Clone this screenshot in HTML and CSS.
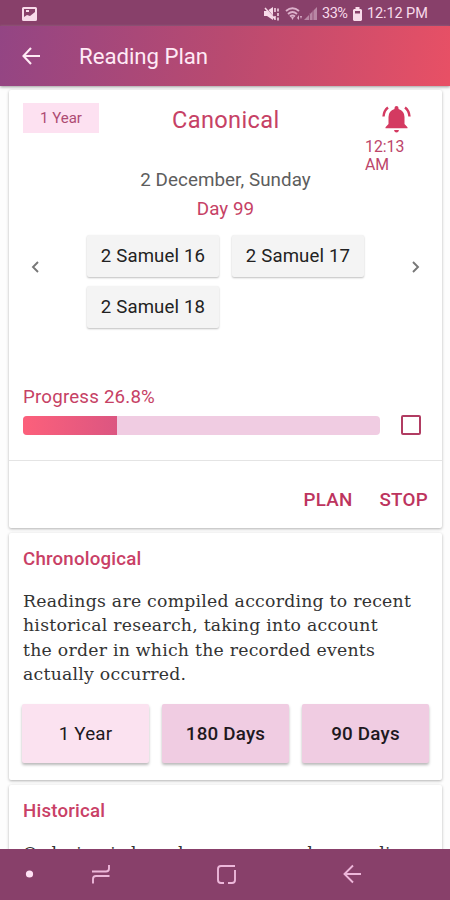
FILE: index.html
```
<!DOCTYPE html>
<html lang="en">
<head>
<meta charset="utf-8">
<title>Reading Plan</title>
<link rel="stylesheet" href="styles.css">
</head>
<body>
<div class="phone">
  <div class="status">
    <svg class="shot" width="15" height="14" viewBox="0 0 15 14"><path fill="#f8dbea" fill-rule="evenodd" d="M1.500 0h12a1.500 1.500 0 0 1 1.500 1.500v11a1.500 1.500 0 0 1-1.500 1.500h-12A1.500 1.500 0 0 1 0 12.500v-11A1.500 1.500 0 0 1 1.500 0zM2 2v8l3-2 3 1 5-4V2z"/><path fill="#f8dbea" d="M4 3h3v2H4z"/></svg>
    <div class="indicators">
      <svg width="17" height="14" viewBox="0 0 17 14"><path fill="#f8dbea" d="M0 4h3l6-4v13L3 9H0z"/><path d="M1 0l11 13" stroke="#88406a" stroke-width="1.200"/><path d="M1 1l10 11M11 1v4M11 9v4M14 1.500v3M14 6v3M14 10.500v3" stroke="#f8dbea" stroke-width="1.500" fill="none"/></svg>
      <svg width="18" height="14" viewBox="0 0 18 14"><g fill="none" stroke="#dcb0cb" stroke-width="1.900"><path d="M1 4q6.500-5.500 13 0M3 7q4.500-4 9 0M5 9.500q2.500-2 5 0"/></g><path fill="#dcb0cb" d="M6 10h3l-1.500 3zM12 11l2-3v5zM15 9h2l-1 3z"/></svg>
      <svg class="signal" width="13" height="13" viewBox="0 0 13 13"><path fill="#b886a4" d="M0 13L13 0v13z"/><path d="M5.500 6v7M9 3v10" stroke="#945078"/></svg>
      <span class="pct">33%</span>
      <svg class="battery" width="9" height="14" viewBox="0 0 9 14"><path fill="#f8dbea" fill-rule="evenodd" d="M2.500 0h4v2H8l1 1v10l-1 1H1l-1-1V3l1-1h1.500zM2 4v2.500h5V4z"/></svg>
      <span class="clock">12:12 PM</span>
    </div>
  </div>
  <header class="bar">
    <svg width="18" height="18" viewBox="0 0 18 18"><path d="M9 1L1.500 9 9 17M2 9h16" fill="none" stroke="#ffeaf5" stroke-width="2.100"/></svg>
    <h1>Reading Plan</h1>
  </header>
  <main>
    <section class="card current">
      <div class="head">
        <span class="tag">1 Year</span>
        <h2>Canonical</h2>
        <div class="alarm">
          <svg width="29" height="28" viewBox="0 0 29 28"><path fill="#d43a61" d="M14.500 1a2 2 0 0 1 2 2v1q6 2 6 8v7l3 3.200v1H3.500v-1l3-3.200v-7q0-6 6-8V3a2 2 0 0 1 2-2zM12 25h5q-.5 2.500-2.500 2.500T12 25z"/><path d="M1.500 11.500Q2 5.500 6 2.500M27.500 11.500Q27 5.500 23 2.500" fill="none" stroke="#d43a61" stroke-width="2.400"/></svg>
          <span>12:13<br>AM</span>
        </div>
      </div>
      <div class="date">2 December, Sunday</div>
      <div class="day">Day 99</div>
      <div class="reader">
        <svg width="8" height="12" viewBox="0 0 8 12"><path d="M7 1L2 6l5 5" fill="none" stroke="#777" stroke-width="1.900"/></svg>
        <div class="chapters"><span>2 Samuel 16</span><span>2 Samuel 17</span><span>2 Samuel 18</span></div>
        <svg width="8" height="12" viewBox="0 0 8 12"><path d="M1 1l5 5-5 5" fill="none" stroke="#777" stroke-width="1.900"/></svg>
      </div>
      <div class="progress-label">Progress 26.8%</div>
      <div class="progress-row"><div class="track"><div class="fill"></div></div><div class="check"></div></div>
      <div class="actions"><span>PLAN</span><span>STOP</span></div>
    </section>
    <section class="card plan">
      <h3>Chronological</h3>
      <p>Readings are compiled according to recent<br>historical research, taking into account<br>the order in which the recorded events<br>actually occurred.</p>
      <div class="options"><span class="light">1 Year</span><span>180 Days</span><span>90 Days</span></div>
    </section>
    <section class="card plan last">
      <h3>Historical</h3>
      <p>Ordering is based upon research regarding</p>
    </section>
  </main>
  <nav>
    <svg width="450" height="51" viewBox="0 0 450 51"><circle cx="29.500" cy="25" r="3.600" fill="#ffe1f4"/><g fill="none" stroke="#edb7da" stroke-width="1.900"><path d="M92 22.500h14q3 0 3-3V16M109.500 27H96q-3 0-3 3v4.500"/><path d="M235 21v10q0 3-3 3h-4M224 34h-3q-3 0-3-3V20q0-3 3-3h14"/><path d="M353 16.500l-8.500 8.500 8.500 8.500M345 25h16"/></g></svg>
  </nav>
</div>
</body>
</html>
```
FILE: styles.css
```
* { box-sizing: border-box; }
body { margin: 0; font-family: Roboto, sans-serif; background: #fdfdfd; }
h1, h2, h3, p { margin: 0; font-weight: 400; }
svg { display: block; flex: none; }
.phone { width: 450px; height: 900px; display: flex; flex-direction: column; overflow: hidden; }
.status { height: 26px; flex: none; background: #88406a; display: flex; justify-content: space-between; align-items: center; padding: 1px 22px 0 22px; color: #f8dbea; font-size: 14.5px; }
.indicators { display: flex; align-items: center; }
.indicators svg:nth-child(2) { margin-left: 4px; }
.signal { margin-left: 1px; }
.pct { margin-left: 5px; width: 26px; letter-spacing: -.5px; }
.battery { margin-left: 5px; }
.clock { margin-left: 5px; width: 61px; white-space: nowrap; letter-spacing: -.1px; }
.bar { height: 60px; flex: none; display: flex; align-items: center; padding: 0 0 0 22px; background: linear-gradient(100deg, #934584, #b94a70 50%, #e85065); box-shadow: 0 1px 3px #999; }
.bar h1 { margin-left: 39px; color: #ffeaf5; font-size: 22.2px; letter-spacing: -.02px; }
main { flex: 1; min-height: 0; overflow: hidden; padding: 4px 8px 0 9px; }
.card { background: #fff; box-shadow: 0 1px 3px rgba(0,0,0,.3); border-radius: 2px; margin-bottom: 5px; }
.current { height: 438px; color: #c64165; padding-top: 13px; }
.head { display: flex; height: 74px; padding-left: 14px; }
.tag { width: 76px; height: 30px; background: #fde1f1; color: #ae4b73; font-size: 15px; display: flex; align-items: center; justify-content: center; }
.head h2 { width: 107px; margin-left: 73px; font-size: 23.6px; line-height: 34px; letter-spacing: .35px; white-space: nowrap; }
.alarm { margin-left: 86px; width: 60px; padding-top: 2px; font-size: 15.8px; line-height: 18px; color: #bd456a; }
.alarm svg { margin: 0 0 5px 17px; }
.date, .day { text-align: center; line-height: 30px; font-size: 18.8px; letter-spacing: .07px; }
.date { color: #5d5d5d; margin-top: -12px; }
.day { margin-top: -1px; }
.reader { display: flex; align-items: flex-start; justify-content: space-between; padding: 11px 22px 0 22px; height: 158px; }
.reader > svg { margin-top: 26px; }
.chapters { width: 289px; display: grid; grid-template-columns: 132px 132px; gap: 9px 13px; margin-left: 12px; }
.chapters span { height: 42px; background: #f4f4f4; color: #222; border-radius: 2px; box-shadow: 0 1px 2px rgba(0,0,0,.25); display: flex; justify-content: center; align-items: center; font-size: 18.6px; letter-spacing: .15px; }
.progress-label { padding: 3px 0 0 14px; font-size: 18.7px; line-height: 24px; height: 33px; letter-spacing: .2px; }
.progress-row { display: flex; align-items: center; padding-left: 14px; height: 20px; }
.track { width: 357px; height: 19px; border-radius: 4px; overflow: hidden; background: #f0cce2; }
.fill { width: 26.2%; height: 100%; background: linear-gradient(90deg, #fc607b, #dc5681); }
.check { width: 20px; height: 20px; margin-left: 21px; border: 2px solid #b13c62; border-radius: 2px; }
.actions { margin-top: 25px; height: 68px; border-top: 1px solid #e4e4e4; display: flex; align-items: center; justify-content: flex-end; gap: 27px; padding: 10px 14px 0; font-size: 18.8px; letter-spacing: .25px; font-weight: 500; color: #bd345e; }
.plan { height: 247px; padding: 14px 13px 0 14px; }
.plan h3 { color: #c94066; font-weight: 500; font-size: 18.7px; line-height: 24px; letter-spacing: .2px; }
.plan p { font-family: "DejaVu Serif", serif; font-size: 17.3px; line-height: 24.4px; color: #333; margin-top: 18px; height: 98px; white-space: nowrap; letter-spacing: .24px; }
.options { display: grid; grid-template-columns: repeat(3, 127px); gap: 13px; margin: 17px 0 0 -1px; }
.options span { height: 59px; display: flex; align-items: center; justify-content: center; background: #f0cce2; box-shadow: 0 2px 3px rgba(0,0,0,.28); border-radius: 2px; font-size: 18.8px; font-weight: 500; letter-spacing: .2px; color: #201820; }
.options .light { background: #fbe2f0; font-weight: 400; }
nav { height: 51px; flex: none; background: #88406a; position: relative; }
```
